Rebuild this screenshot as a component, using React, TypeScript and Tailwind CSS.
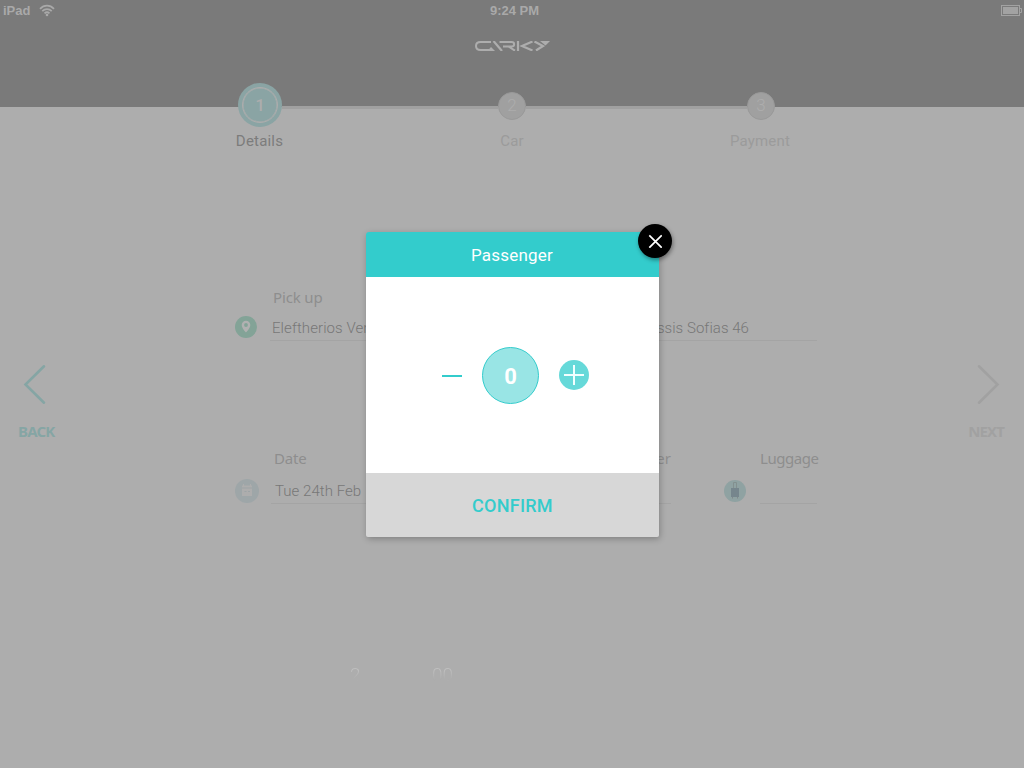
import React from "react";

function StatusBar() {
  return (
    <div className="flex h-[21px] items-center justify-between pl-[3px] pr-[2px] font-['Liberation_Sans',Arial,sans-serif] text-[13px] font-bold leading-[21px] text-[#a9a9a9]">
      <div className="flex w-[200px] items-center gap-[9px]">
        <span>iPad</span>
        <svg width="16" height="13" viewBox="0 0 16 13" fill="none" stroke="#a9a9a9" strokeWidth="1.7">
          <path d="M1 4.8C5 .6 11 .6 15 4.8" />
          <path d="M3.3 7.2C6 4.5 10 4.5 12.7 7.2" />
          <path d="M5.5 9.4C7 8 9 8 10.5 9.4" />
          <circle cx="8" cy="11" r="1.3" fill="#a9a9a9" stroke="none" />
        </svg>
      </div>
      <span className="pl-[4px]">9:24 PM</span>
      <div className="flex w-[200px] justify-end">
        <svg width="21" height="11" viewBox="0 0 21 11">
          <rect x=".5" y=".5" width="18" height="10" fill="none" stroke="#a2a2a2" />
          <rect x="2" y="2" width="15" height="7" fill="#a2a2a2" />
          <path d="M19 3.5h1.5v4H19" fill="none" stroke="#a2a2a2" />
        </svg>
      </div>
    </div>
  );
}

function Logo() {
  return (
    <svg width="75" height="10" viewBox="0 0 75 10" fill="none" stroke="#adadad" strokeWidth="2">
      <path d="M16 1H5.5C2.5 1 1 2.4 1 5s1.500 4 4.500 4H15" />
      <path d="M12.500 10L16 6 20 10Z" fill="#adadad" stroke="none" />
      <path d="M18.500 0L27 10" strokeWidth="2.200" />
      <path d="M24.500 1H36.500C40 1 40 5.500 36.500 5.500H28M33.500 5.500L40 9.700" strokeWidth="2" />
      <path d="M43 0V10" strokeWidth="2.200" />
      <path d="M57.500 .5L47 5 57.500 9.500" strokeWidth="2.200" />
      <path d="M59.500 .5L68 5 61 9.500" strokeWidth="2.200" />
      <path d="M65 0H75L70.500 4.500Z" fill="#adadad" stroke="none" />
    </svg>
  );
}

function Stepper() {
  return (
    <div className="relative -mt-6">
      <div className="flex h-11 items-start pl-[238px] font-['Roboto',sans-serif] text-[#adadad]">
        <div className="flex size-11 items-center justify-center rounded-full bg-[#8aa4a4]">
          <div className="flex size-[36px] items-center justify-center rounded-full border-[1.5px] border-[#adadad] pt-px text-[17px] font-medium shadow-[inset_0_0_0_0.5px_#adadad]">1</div>
        </div>
        <div className="mt-[23px] h-[3px] w-[216px] bg-[#a0a0a0]" />
        <div className="mt-[9px] flex size-7 items-center justify-center rounded-full border border-[#999] bg-[#a0a0a0] text-[17px] font-light">2</div>
        <div className="mt-[23px] h-[3px] w-[221px] bg-[#a0a0a0]" />
        <div className="mt-[9px] flex size-7 items-center justify-center rounded-full border border-[#999] bg-[#a0a0a0] text-[17px] font-light">3</div>
      </div>
      <div className="mt-1 flex h-5 pl-[209px] text-center font-['Roboto',sans-serif] text-[15px] leading-5 tracking-[0.2px] text-[#9b9b9b]">
        <span className="w-[101px] text-[#7c7c7c]">Details</span>
        <span className="ml-[152px] w-[100px]">Car</span>
        <span className="ml-[148px] w-[100px]">Payment</span>
      </div>
    </div>
  );
}

function PinIcon() {
  return (
    <svg width="22" height="22" viewBox="0 0 22 22">
      <circle cx="11" cy="11" r="11" fill="#83a397" />
      <path fillRule="evenodd" d="M11 4.700a4.300 4.300 0 0 0-4.300 4.300c0 3 4.300 7.500 4.300 7.500s4.300-4.500 4.300-7.500A4.300 4.300 0 0 0 11 4.700ZM11 7.100a1.900 1.900 0 1 1 0 3.800 1.900 1.900 0 0 1 0-3.800Z" fill="#b1b1b1" />
    </svg>
  );
}

function CalendarIcon() {
  return (
    <svg width="24" height="24" viewBox="0 0 24 24">
      <circle cx="12" cy="12" r="12" fill="#9ea6a8" />
      <path d="M7 6.500H17V17H7Z" fill="#adadad" />
      <path d="M8.500 5v2M15.500 5v2" stroke="#adadad" />
      <path d="M7 9h10M9.500 12.500h2M13 12.500h2" stroke="#9ba3a5" strokeWidth=".9" />
    </svg>
  );
}

function LuggageIcon() {
  return (
    <svg width="22" height="22" viewBox="0 0 22 22">
      <circle cx="11" cy="11" r="11" fill="#8fa2a2" />
      <path d="M9.500 8V2.500H12.500V8" fill="none" stroke="#83908f" />
      <rect x="7" y="8" width="8" height="9" fill="#76868d" />
      <path d="M8.500 17v1.500M13.500 17v1.500" stroke="#80898b" />
    </svg>
  );
}

function Field({ label, value, box, labelClass, valueClass }: { label: string; value: string; box: string; labelClass: string; valueClass: string }) {
  return (
    <div className={`flex flex-col whitespace-nowrap border-b border-[#a4a4a4] ${box}`}>
      <span className={`-mt-px font-['Noto_Sans',sans-serif] text-[15px] leading-5 text-[#8e8e8e] ${labelClass}`}>{label}</span>
      <span className={`font-['Roboto',sans-serif] text-[15px] font-light leading-5 text-[#777] ${valueClass}`}>{value}</span>
    </div>
  );
}

function BookingForm() {
  return (
    <div className="w-[582px] pt-[137px]">
      <div className="flex h-[53px] items-start">
        <div className="mt-7"><PinIcon /></div>
        <Field label="Pick up" value="Eleftherios Venizelos" box="ml-[13px] h-[53px] w-[247px]" labelClass="pl-[3px] tracking-[-0.15px]" valueClass="mt-[11px] pl-[2px] tracking-[0.08px]" />
        <Field label="Drop off" value="Vassilissis Sofias 46" box="ml-[53px] h-[53px] w-[247px]" labelClass="" valueClass="mt-[11px] w-[179px] text-right tracking-[0.05px]" />
      </div>
      <div className="mt-[108px] flex h-[55px] items-start">
        <div className="mt-[30px]"><CalendarIcon /></div>
        <Field label="Date" value="Tue 24th Feb" box="ml-[12px] h-[55px] w-[140px]" labelClass="pl-[3px] tracking-[-0.2px]" valueClass="mt-[13px] pl-[4px] tracking-[0.05px]" />
        <Field label="Passenger" value="" box="ml-[189px] h-[55px] w-[71px]" labelClass="self-end" valueClass="" />
        <div className="ml-[53px] mt-[31px]"><LuggageIcon /></div>
        <Field label="Luggage" value="" box="ml-[14px] h-[55px] w-[57px]" labelClass="tracking-[-0.45px]" valueClass="" />
      </div>
      <div className="mt-[160px] flex h-5 pl-[115px] font-['Roboto',sans-serif] text-[19px] font-light leading-[22px]">
        <span className="w-[82px] bg-linear-to-b from-[#bfbfbf] from-30% to-[#adadad] to-75% bg-clip-text text-transparent">2</span>
        <span className="bg-linear-to-b from-[#bfbfbf] from-30% to-[#adadad] to-75% bg-clip-text text-transparent">00</span>
      </div>
    </div>
  );
}

function PassengerDialog() {
  return (
    <div className="absolute left-[366px] top-[232px] flex h-[305px] w-[293px] flex-col rounded-[3px] font-['Roboto',sans-serif] shadow-[1px_2px_6px_rgba(0,0,0,0.25)]">
      <div className="flex h-[45px] items-center justify-center rounded-t-[3px] bg-[#33cccc] pr-px pt-[3px] text-[17px] tracking-[0.2px] text-white">Passenger</div>
      <div className="flex h-[196px] items-center gap-5 bg-white pl-[76px]">
        <div className="mt-[2px] h-[2px] w-5 bg-[#33cccc]" />
        <div className="mt-px flex size-[57px] items-center justify-center rounded-full border border-[#33cccc] bg-[#99e5e5] pt-px text-[22px] font-bold text-white">0</div>
        <svg width="30" height="30" viewBox="0 0 30 30">
          <circle cx="15" cy="15" r="15" fill="#66d9d9" />
          <path d="M5 15H25M15 5V25" stroke="#f2ffff" strokeWidth="2" />
        </svg>
      </div>
      <div className="flex h-16 items-center justify-center rounded-b-[2px] bg-[#d7d7d7] text-[18px] font-medium tracking-[0.25px] text-[#33cccc]">CONFIRM</div>
      <div className="absolute -top-2 left-[272px] flex size-[34px] items-center justify-center rounded-full bg-black shadow-[1px_2px_4px_rgba(0,0,0,0.4)]">
        <svg width="14" height="14" viewBox="0 0 14 14">
          <path d="M1.300 1.300L13.700 13.700M13.700 1.300L1.300 13.700" stroke="white" strokeWidth="1.7" />
        </svg>
      </div>
    </div>
  );
}

export default function App() {
  return (
    <div className="relative flex h-[768px] w-[1024px] flex-col overflow-hidden bg-[#adadad]">
      <header className="h-[107px] shrink-0 bg-[#7a7a7a]">
        <StatusBar />
        <div className="flex justify-center pt-5"><Logo /></div>
      </header>
      <Stepper />
      <main className="flex flex-1 items-start">
        <div className="flex w-[235px] flex-col items-start pl-[18px] pt-[213px] font-['Noto_Sans',sans-serif] text-[15px] font-bold leading-5 tracking-[-0.8px] text-[#85a5a4]">
          <svg width="24" height="41" viewBox="0 0 24 41" className="ml-[5px]" fill="none" stroke="currentColor" strokeWidth="2.600" strokeLinecap="round">
            <path d="M21 2.300L2.500 20.500 21 38.700" />
          </svg>
          <span className="mt-[16px]">BACK</span>
        </div>
        <BookingForm />
        <div className="flex flex-1 flex-col items-end pr-5 pt-[213px] font-['Noto_Sans',sans-serif] text-[15px] font-bold leading-5 tracking-[-0.9px] text-[#a1a1a1]">
          <svg width="24" height="41" viewBox="0 0 24 41" className="mr-1" fill="none" stroke="currentColor" strokeWidth="2.600" strokeLinecap="round">
            <path d="M3 2.300L21.500 20.500 3 38.700" />
          </svg>
          <span className="mt-[16px]">NEXT</span>
        </div>
      </main>
      <PassengerDialog />
    </div>
  );
}
